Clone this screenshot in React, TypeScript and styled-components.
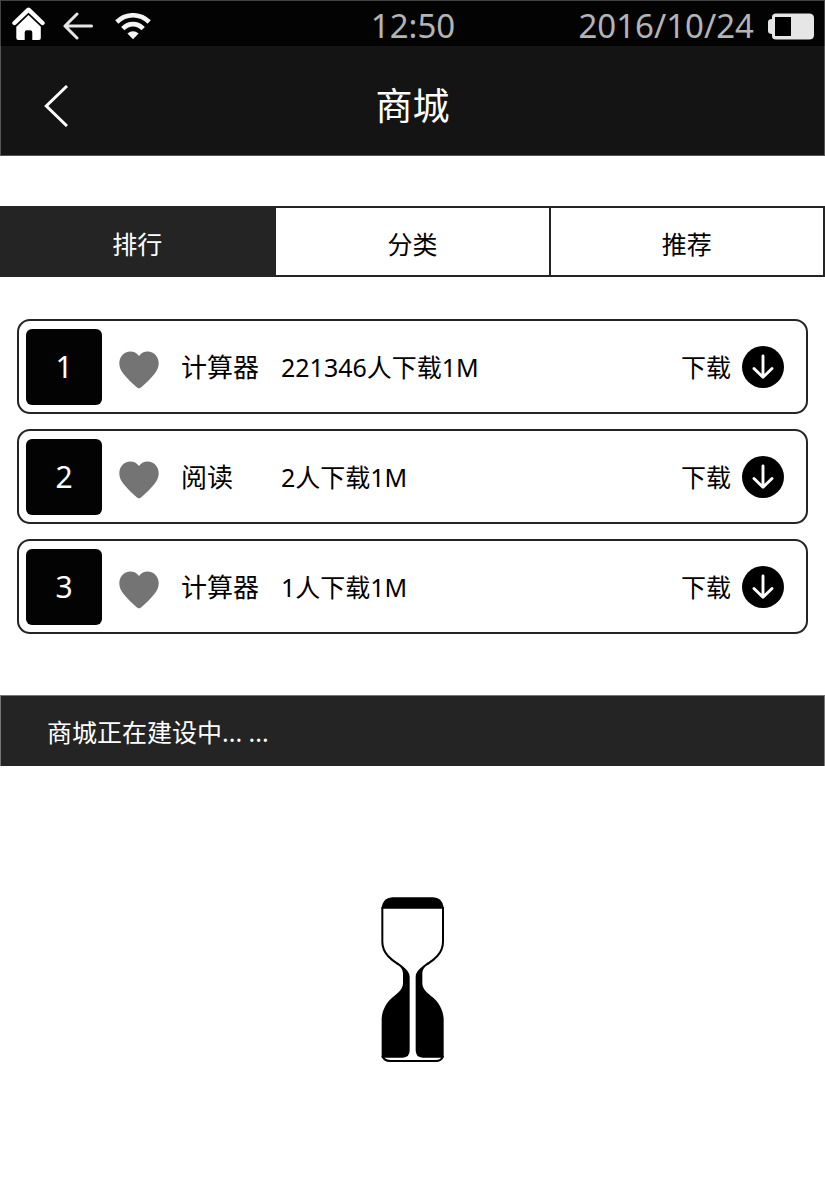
import React, { useState } from "react";
import styled, { createGlobalStyle } from "styled-components";

const GlobalStyle = createGlobalStyle`
  *, *::before, *::after { box-sizing: border-box; }
  body {
    margin: 0;
    background: #fff;
    color: #000;
    font-family: "Noto Sans", "Noto Sans CJK SC", sans-serif;
  }
  button { font: inherit; color: inherit; border: 0; padding: 0; background: none; cursor: pointer; }
  svg { display: block; flex: none; }
`;

const StatusBar = styled.div`
  display: grid;
  grid-template-columns: 1fr auto 1fr;
  align-items: center;
  height: 46px;
  padding: 5px 10px 0 11px;
  background: #030303;
  border: 1px solid #444;
  border-width: 1px 1px 0;
  color: #b4b4b4;
  font-size: 33px;
  line-height: 40px;
`;

const StatusGroup = styled.div<{ $end?: boolean }>`
  display: flex;
  align-items: center;
  justify-content: ${(p) => (p.$end ? "flex-end" : "flex-start")};
  gap: ${(p) => (p.$end ? 14 : 18)}px;
`;

const TitleBar = styled.header`
  display: grid;
  grid-template-columns: 1fr auto 1fr;
  align-items: center;
  height: 110px;
  padding: 10px 43px 0;
  background: #141414;
  border: 1px solid #555;
  border-top: 0;
  color: #fff;
`;

const Title = styled.h1`
  margin: 0;
  font-size: 37px;
  font-weight: 400;
  line-height: 48px;
`;

const IconButton = styled.button`
  display: flex;
  justify-self: start;
`;

const Tabs = styled.nav`
  display: grid;
  grid-template-columns: repeat(3, 1fr);
  height: 71px;
  margin-top: 50px;
  border: 2px solid #242424;
  border-left: 0;
`;

const Tab = styled.button<{ $active: boolean }>`
  && {
    background: ${(p) => (p.$active ? "#242424" : "#fff")};
    color: ${(p) => (p.$active ? "#fff" : "#000")};
    font-size: 25px;
    line-height: 32px;
    padding-top: 4px;
  }
  & + & { border-left: 2px solid #242424; }
`;

const AppList = styled.ul`
  display: grid;
  gap: 15px;
  margin: 42px 17px 0;
  padding: 0;
  list-style: none;
`;

const AppRow = styled.li`
  display: flex;
  align-items: center;
  height: 95px;
  padding: 0 22px 0 7px;
  border: 2px solid #242424;
  border-radius: 13px;
  font-size: 25px;
  line-height: 32px;
`;

const Rank = styled.span`
  display: flex;
  align-items: center;
  justify-content: center;
  width: 76px;
  height: 76px;
  border-radius: 6px;
  background: #030303;
  color: #fff;
  font-size: 30px;
`;

const Favourite = styled.button`
  margin: 7px 22px 0 17px;
`;

const AppName = styled.span`
  width: 100px;
  font-size: 26px;
`;

const Stats = styled.span`
  flex: 1;
`;

const Download = styled.button`
  display: flex;
  align-items: center;
  gap: 11px;
`;

const Notice = styled.p`
  margin: 61px 0 0;
  padding: 20px 46px 18px;
  background: #242424;
  border: 1px solid #777;
  border-bottom: 0;
  color: #fff;
  font-size: 25px;
  line-height: 32px;
`;

const Waiting = styled.section`
  display: flex;
  justify-content: center;
  padding: 131px 0 137px;
`;

const HomeIcon = () => (
  <svg width="33" height="38" viewBox="0.5 0.5 33 38" fill="#fff" aria-hidden="true">
    <path d="M3 16.5 17 3.2 31 16.5" fill="none" stroke="#fff" strokeWidth="4.4" strokeLinecap="round" strokeLinejoin="round" />
    <path d="M17 8.5 29.3 20.2V31.5Q29.3 33.5 27.3 33.5H20.8V26Q20.8 23.8 18.6 23.8H15.4Q13.2 23.8 13.2 26V33.5H6.8Q4.8 33.5 4.8 31.5V20.2Z" />
  </svg>
);

const ArrowLeftIcon = () => (
  <svg width="34" height="28" viewBox="0 0 34 28" fill="none" stroke="#e6e6e6" strokeWidth="3" strokeLinecap="round" strokeLinejoin="round" aria-hidden="true">
    <path d="M14 2 2 14 14 26M2 14H28.5" />
  </svg>
);

const WifiIcon = () => (
  <svg width="36" height="27" viewBox="0 0 36 27" fill="none" stroke="#f4f4f4" strokeWidth="4.6" aria-hidden="true">
    <path d="M1.8 9C11 0 25 0 34.2 9" />
    <path d="M7.8 15.6C13.5 9.6 22.5 9.6 28.2 15.6" />
    <path d="M12.4 20.4Q18 16 23.6 20.4L18 26.3Z" fill="#f4f4f4" stroke="none" />
  </svg>
);

const BatteryIcon = () => (
  <svg width="46" height="27" viewBox="0 0 46 27" role="img" aria-label="电池">
    <path d="M4 6V4Q4 0.5 8 0.5H41Q46 0.5 46 5V22Q46 26.5 41 26.5H8Q4 26.5 4 23V21Q0 21 0 18V9Q0 6 4 6Z" fill="#e6e6e6" />
    <rect x="7" y="4" width="16" height="19" fill="#000" />
  </svg>
);

const BackIcon = () => (
  <svg width="24" height="42" viewBox="0 0 24 42" fill="none" stroke="#fff" strokeWidth="3" aria-hidden="true">
    <path d="M23 1 2.3 21 23 41" />
  </svg>
);

const HeartIcon = () => (
  <svg width="40" height="38" viewBox="0 0 40 38" fill="#747474" aria-hidden="true">
    <path d="M18 36.6C13 32 8.5 28 4.6 23C2 19.7 .3 16.5 .3 12.5C.3 5.6 5 .5 11.3 .5C15 .5 17.6 2 20 4.9C22.4 2 25 .5 28.7 .5C35 .5 39.7 5.6 39.7 12.5C39.7 16.5 38 19.7 35.4 23C31.5 28 27 32 22 36.6Q20 38.2 18 36.6Z" />
  </svg>
);

const DownloadIcon = () => (
  <svg width="42" height="42" viewBox="0 0 42 42" aria-hidden="true">
    <circle cx="21" cy="21" r="21" fill="#000" />
    <path d="M21 10V31M12 22.5 21 31.3 30 22.5" fill="none" stroke="#fff" strokeWidth="2.9" strokeLinecap="round" strokeLinejoin="round" />
  </svg>
);

const Hourglass = () => (
  <svg width="63" height="165" viewBox="33 36 189 495" role="img" aria-label="建设中">
    <path d="M35 71V67Q40 37 68 37H189Q216 37 221 67V71Z" />
    <g fill="none" stroke="#000" strokeWidth="6">
      <path d="M37 66V170C37 188 46 204 54 213C62 222 74 231 85 238" />
      <path d="M219 66V170C219 188 210 204 202 213C194 222 182 231 171 238" />
      <path d="M37 512Q42 528 60 528H197Q215 528 219 512" />
    </g>
    <path d="M82 232C98 243 119 258 119 275V496Q119 518 98 518H35V400C37 372 52 350 66 338C82 326 99 314 99 294V266C99 252 90 244 80 238Z" />
    <path d="M174 232C158 243 137 258 137 275V496Q137 518 158 518H221V400C219 372 204 350 190 338C174 326 157 314 157 294V266C157 252 166 244 176 238Z" />
  </svg>
);

const tabs = ["排行", "分类", "推荐"];

const apps = [
  { rank: 1, name: "计算器", stats: "221346人下载1M" },
  { rank: 2, name: "阅读", stats: "2人下载1M" },
  { rank: 3, name: "计算器", stats: "1人下载1M" },
];

export default function App() {
  const [active, setActive] = useState(0);

  return (
    <>
      <GlobalStyle />
      <StatusBar>
        <StatusGroup>
          <IconButton aria-label="主页"><HomeIcon /></IconButton>
          <IconButton aria-label="后退"><ArrowLeftIcon /></IconButton>
          <WifiIcon />
        </StatusGroup>
        <time>12:50</time>
        <StatusGroup $end>
          <time dateTime="2016-10-24">2016/10/24</time>
          <BatteryIcon />
        </StatusGroup>
      </StatusBar>
      <TitleBar>
        <IconButton aria-label="返回"><BackIcon /></IconButton>
        <Title>商城</Title>
      </TitleBar>
      <main>
        <Tabs>
          {tabs.map((label, i) => (
            <Tab key={label} $active={i === active} aria-pressed={i === active} onClick={() => setActive(i)}>
              {label}
            </Tab>
          ))}
        </Tabs>
        <AppList>
          {apps.map((app) => (
            <AppRow key={app.rank}>
              <Rank>{app.rank}</Rank>
              <Favourite aria-label="收藏"><HeartIcon /></Favourite>
              <AppName>{app.name}</AppName>
              <Stats>{app.stats}</Stats>
              <Download>
                下载
                <DownloadIcon />
              </Download>
            </AppRow>
          ))}
        </AppList>
        <Notice>商城正在建设中... ...</Notice>
        <Waiting>
          <Hourglass />
        </Waiting>
      </main>
    </>
  );
}
